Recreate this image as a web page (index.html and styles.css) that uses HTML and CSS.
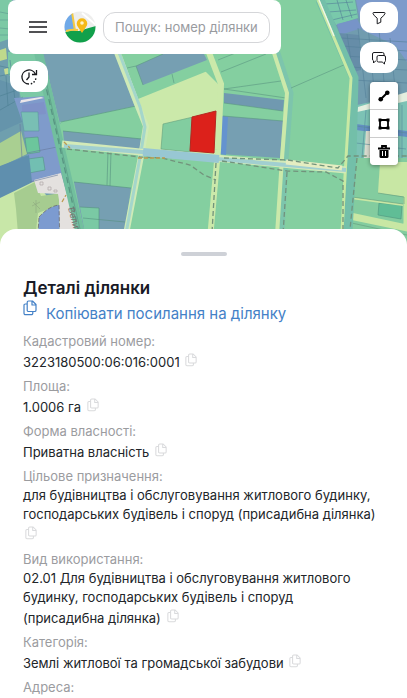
FILE: index.html
```html
<!DOCTYPE html>
<html lang="uk">
<head>
  <meta charset="UTF-8" />
  <meta name="viewport" content="width=device-width, initial-scale=1.0"/>
  <title>Деталі ділянки</title>
  <link rel="stylesheet" href="styles.css">
</head>
<body>

  <!-- Icons used more than once -->
  <svg class="icon-defs" aria-hidden="true">
    <symbol id="icon-copy" viewBox="0 0 14 16">
      <path d="M5.500 1h4l3.500 3.500v5.700a1.300 1.300 0 0 1-1.300 1.300H5.500a1.300 1.300 0 0 1-1.300-1.300V2.300A1.300 1.300 0 0 1 5.500 1zM9 1v4h4M4 4H2.300A1.300 1.300 0 0 0 1 5.300v8A1.300 1.300 0 0 0 2.300 14.600H8.500A1.300 1.300 0 0 0 9.800 13.300V11.700" fill="none" stroke="currentColor" stroke-width="1.200" stroke-linejoin="round"/>
    </symbol>
  </svg>

  <main class="app">
    <section class="map" aria-label="Карта">
      <svg class="map-canvas" viewBox="0 0 407 250" preserveAspectRatio="xMidYMin slice" aria-hidden="true">
        <rect width="407" height="250" fill="#84cfa0"/>

        <!-- left side -->
        <path d="M0 0H30L56 110 84 250H0z" fill="#6f9fae"/>
        <path d="M0 0H12V38L0 42z" fill="#7cc9a5"/>
        <path d="M0 12l10 2M0 20h10M0 28l10 1M0 35h10" stroke="#5d9b90" stroke-width=".6"/>
        <path d="M0 50l6-2 1 11-7 2z" fill="#bfd98c"/>
        <path d="M4 69l8-2v7l-7 1z" fill="#c7dd93"/>
        <path d="M8 52h37l7 50-30 2-4-20-10-10z" fill="#7cc9a5"/>
        <path d="M0 80l18 6 4 36-22 10z" fill="#6594ab"/>
        <path d="M10 60l5 40M0 96l20-7M0 110l23-13M0 66l9 2M0 76l10-2M6 76l2 30" stroke="#4d7f93" stroke-width=".6" fill="none"/>
        <path d="M14 98l34-2 14 78-31 10-8-60z" fill="#7f9bcb"/>
        <path d="M20 103l1-3 20-3 3 1z" fill="#ece6ea"/>
        <path d="M22 105l22-3 2 12-24 2z" fill="#7f92c8"/>
        <path d="M21 112h17l1 19H24z" fill="#79bfb4" stroke="#5d93a2" stroke-width=".6"/>
        <path d="M25 138l13-1 2 15-13 2z" fill="#6cc69c" stroke="#559387" stroke-width=".6"/>
        <path d="M28 159l15-2 2 13-16 3z" fill="#72bfb2" stroke="#559387" stroke-width=".6"/>
        <path d="M0 143l21-12 6 23-27 13z" fill="#a9cf91"/>
        <path d="M0 166l29-11 3 27-32 19z" fill="#5f8fae"/>
        <path d="M0 198l35-17 11 14 18 30v25H0z" fill="#c8e7a8"/>
        <path d="M14 193l21-11 6 14 20-3 3 10-26 10-2 18-18 3-2-25z" fill="#a6cc90"/>
        <path d="M34 180l27-7 14 50 1 27H60l-1-50-1-6-20-1z" fill="#e4e1df"/>
        <path d="M39 217q10-11 20-12l1 45H37z" fill="#7c9bd0" stroke="#665f64" stroke-width=".7" stroke-dasharray="4 2"/>
        <path d="M40 182h3v3h-3zM48 187h3v3h-3zM54 190h3v2h-3z" fill="none" stroke="#b0a8a8" stroke-width=".7"/>
        <path d="M32 206l8-4M36 200v13M33 202l7 7" stroke="#8fa980" stroke-width=".6"/>
        <path d="M20 124l2 34M27 153l30-6M30 182l28-7" stroke="#66789e" stroke-width=".6" fill="none"/>

        <!-- blue and green parcels in the middle -->
        <path d="M42 50h72l21 57-75 17z" fill="#76a0b2"/>
        <path d="M60 122l75-16 8 31-80-6z" fill="#84cfa0"/>
        <path d="M63 131l79 8-2 11-76-8z" fill="#769fb2"/>
        <path d="M74 182l57 6-9 62H88z" fill="#769fb2"/>
        <path d="M80 207l19 1v42H88z" fill="#7ac9a4"/>
        <path d="M61 122l75-16M63 131l79 8M108 151l-1 34M111 152l-1 34M80 207l19 1v42M83 218l42 4M74 182l57 6" fill="none" stroke="#55907f" stroke-width=".6"/>

        <!-- road going down along the left blocks -->
        <path d="M38 50L55 125 84 250" fill="none" stroke="#72bf9e" stroke-width="9"/>
        <path d="M42 70L56 130 83 250" fill="none" stroke="#589482" stroke-width="1.300" stroke-dasharray="6 4"/>
        <path d="M47 85l9 40 27 117" fill="none" stroke="#589482" stroke-width=".6"/>

        <!-- pale field -->
        <path d="M120 50l25 0 55 16 20 20-2 70-76-6 6-25-17-38z" fill="#cbe9aa"/>
        <path d="M120 50h87l3 20-72 29z" fill="#84cfa0"/>
        <path d="M136 66l27-12h41l3 6-64 25z" fill="#769fb2"/>
        <path d="M127 68l9-2 7 19M172 74l2 9M136 66l27-12" fill="none" stroke="#5b9581" stroke-width=".6"/>
        <path d="M163 124l30-7-3 35-29-3z" fill="#82cda0" stroke="#649f7e" stroke-width=".6"/>
        <path d="M116 50l21 54 9 22-4 25-19 99" fill="none" stroke="#cfeab7" stroke-width="6"/>
        <path d="M118 50l22 57 5 20-4 25-18 98" fill="none" stroke="#a4d6cb" stroke-width="3"/>

        <!-- parcels right of the red one -->
        <path d="M214 58l59-8 16 44-5 66-69-8 8-70z" fill="#84cfa0"/>
        <path d="M224 93l60 7-1 11-59-8z" fill="#7099b0"/>
        <path d="M223 116l60 5-3 37-60-4z" fill="#769fb2"/>
        <path d="M222 116l6 1-2 38-7-1z" fill="#6493cf"/>
        <path d="M221 72l45-18M224 89l57-8M224 89l62 9M218 60l20-8M224 103l59 8M223 116l60 5" fill="none" stroke="#5b9581" stroke-width=".6"/>
        <path d="M208 50l13 34-3 66-9 100" fill="none" stroke="#cbe9aa" stroke-width="6"/>
        <path d="M277 50l14 43-5 67-5 90" fill="none" stroke="#7dc5ac" stroke-width="5"/>
        <path d="M273 50l14 43-5 65-6 92" fill="none" stroke="#cbe9aa" stroke-width="4"/>
        <path d="M291 88l55-24" stroke="#5b9581" stroke-width=".6"/>

        <!-- right side -->
        <path d="M318 0h89v170h-56l4-90z" fill="#719caf"/>
        <path d="M322 0h33l3 18-22 7z" fill="#79c9ab"/>
        <path d="M337 24l20-5 5 9-22 7z" fill="#7794c8"/>
        <path d="M356 0h51v62l-12-17-33-15z" fill="#7d9bcb"/>
        <path d="M339 33l20 2 2 35-12 3z" fill="#668da8"/>
        <path d="M341 38l66 4M342 46l65 5M345 56l62 4M349 67l58 3M353 80l54 3M347 34l10 66M358 28l8 70M368 26l7 74M379 30l6 62M390 38l5 50M325 4l28-2M328 12l28-2M332 20l25-6M337 0l6 20M346 0l6 18" stroke="#547f98" stroke-width=".6"/>
        <path d="M357 105l50-11v68h-56z" fill="#7cc2b5"/>
        <path d="M358 107l49-15v9l-50 11z" fill="#e4efdf"/>
        <path d="M356 124l51 7v6l-51-7z" fill="#638fc2"/>
        <path d="M366 131h12v27h-14z" fill="#d9dccf"/>
        <path d="M356 126l51 7M356 143l50 6M366 110l-4 48M402 105v57" stroke="#568b9b" stroke-width=".6"/>
        <path d="M349 158h58v92h-61z" fill="#83cc9f"/>
        <path d="M380 162h27v35l-29-4z" fill="#c8e7a4"/>
        <path d="M379 203l23 2-1 14-23-4z" fill="#60bd96" stroke="#4e937d" stroke-width=".6"/>
        <path d="M350 216l57 12V165" fill="none" stroke="#c8e7a4" stroke-width="7"/>
        <path d="M351 198l52 7" stroke="#c8e7a4" stroke-width="2"/>
        <path d="M352 197l51 7M378 193l26 4v7M347 222l60 13" fill="none" stroke="#629b7c" stroke-width=".6"/>
        <path d="M320 0l34 78-2 80-5 92" fill="none" stroke="#73bfa9" stroke-width="9"/>
        <path d="M318 0l33 78-5 80-5 92" fill="none" stroke="#c9e9a3" stroke-width="3"/>
        <path d="M319 0l15 36" stroke="#eef6ea" stroke-width="1.300"/>

        <!-- horizontal road -->
        <path d="M62 144l78 8 75 6 131 12" fill="none" stroke="#d3eab8" stroke-width="7"/>
        <path d="M64 146l78 6 75 7 129 11" fill="none" stroke="#a1cfd0" stroke-width="4"/>
        <path d="M143 152l76 7" stroke="#98c7d3" stroke-width="8"/>
        <path d="M286 162l56 6" stroke="#e5edc1" stroke-width="5"/>
        <g fill="none" stroke="#72937c" stroke-width="1.300" stroke-dasharray="5 3">
          <path d="M67 149l73 8 22 1 28 7 14 10 12 5"/>
          <path d="M222 161l65 10 39 1 17 9v69"/>
          <path d="M216 163l-5 87M287 172l-5 78M357 158l-9 92"/>
          <path d="M224 158l64 2 50 8 10-12h59"/>
        </g>
        <path d="M64 142l6 6M138 158h27M62 202l4-7" stroke="#bd9b50" stroke-width="1.300" stroke-dasharray="4 2"/>
        <text class="street-name" transform="translate(68 208) rotate(76)">Велика</text>

        <path class="selected-parcel" d="M192 117l24-6-2 42-24-2z"/>
      </svg>

      <header class="topbar">
        <button class="menu-btn" type="button" aria-label="Меню">
          <svg width="20" height="14" viewBox="0 0 20 14"><path d="M1 2h18M1 7h18M1 12h18" stroke="#18191d" stroke-width="1.600"/></svg>
        </button>
        <a class="logo" href="#" aria-label="Головна">
          <svg width="32" height="32" viewBox="0 0 32 32">
            <clipPath id="logo-clip"><circle cx="16" cy="16" r="15.500"/></clipPath>
            <g clip-path="url(#logo-clip)">
              <path d="M0 0h32v32H0z" fill="#eeeeed"/>
              <path d="M0 0h8l3 20H0z" fill="#70a9e8"/>
              <path d="M8 1l3 19" stroke="#f4ca43" stroke-width="2"/>
              <path d="M18 2l14 12" stroke="#fff" stroke-width="2"/>
              <path d="M0 21q8-2 15-1 9-3 17-5v17H0z" fill="#11a04b"/>
              <path d="M2 20q7-2 12-1" stroke="#f4ca43" stroke-width="2" fill="none"/>
            </g>
            <path d="M18 22l-4-6a5.300 5.300 0 1 1 8 0z" fill="#f5b916"/>
            <circle cx="18" cy="12" r="1.800" fill="#fff3c7"/>
          </svg>
        </a>
        <input class="search" type="text" aria-label="Пошук" placeholder="Пошук: номер ділянки">
      </header>

      <button class="pill history-btn" type="button" aria-label="Історія">
        <svg width="18" height="18" viewBox="0 0 18 18" fill="none" stroke="#18191d" stroke-width="1.300">
          <path d="M9 16A7 7 0 1 1 15.300 6M16.500 2v4.500H12M9 4.500V9l-2.500 3"/>
          <path d="M11.500 15.600A7 7 0 0 0 16 9" stroke-linecap="round" stroke-width="1.600" stroke-dasharray=".1 3"/>
        </svg>
      </button>

      <div class="map-tools">
        <button class="pill" type="button" aria-label="Фільтр">
          <svg width="14" height="14" viewBox="0 0 14 14"><path d="M1.800 1.500h10.400q1 0 .8 1-.4 1.800-4.200 4.700v4L5.200 12.800V7.200Q1.400 4.300 1 2.500q-.2-1 .8-1z" fill="none" stroke="#18191d" stroke-linejoin="round"/></svg>
        </button>
        <button class="pill" type="button" aria-label="Повідомлення">
          <svg width="16" height="14" viewBox="0 0 16 14" fill="none" stroke="#18191d" stroke-linejoin="round">
            <path d="M5 10H4.500L2.500 12V9.800Q1.500 9.500 1.500 8V3Q1.500 1.500 3 1.500h8.500Q13 1.500 13 3v1.500"/>
            <path d="M7.500 4.500h5.500q1.500 0 1.500 1.500v3.500q0 1.300-1 1.500V13l-2.300-2H7.500Q6 11 6 9.500V6q0-1.500 1.500-1.500z"/>
          </svg>
        </button>
        <div class="draw-tools">
          <button type="button" aria-label="Лінія">
            <svg width="12" height="12" viewBox="0 0 12 12"><path d="M2.500 9.500l7-7" stroke="#000" stroke-width="2"/><circle cx="2.700" cy="9.300" r="2.300"/><circle cx="9.300" cy="2.700" r="2.300"/></svg>
          </button>
          <button type="button" aria-label="Полігон">
            <svg width="12" height="12" viewBox="0 0 12 12"><path d="M2 2h8v8H2z" fill="none" stroke="#000" stroke-width="1.800"/><path d="M.5.5h3v3h-3zM8.500.5h3v3h-3zM.5 8.500h3v3h-3zM8.500 8.500h3v3h-3z"/></svg>
          </button>
          <button type="button" aria-label="Видалити">
            <svg width="12" height="14" viewBox="0 0 12 14"><path d="M0 3.500h12M4 3V1h4v2" fill="none" stroke="#000" stroke-width="1.800"/><path d="M1.500 5h9v6.500q0 1.500-1.500 1.500H3q-1.500 0-1.500-1.500z"/><path d="M4.500 6v5M7.500 6v5" stroke="#fff"/></svg>
          </button>
        </div>
      </div>
    </section>

    <section class="sheet">
      <div class="handle"></div>
      <h1>Деталі ділянки</h1>
      <a class="copy-link" href="#">
        <svg width="14" height="16"><use href="#icon-copy"/></svg>
        <span>Копіювати посилання на ділянку</span>
      </a>

      <dl class="details">
        <dt>Кадастровий номер:</dt>
        <dd>3223180500:06:016:0001 <button class="copy-btn" type="button" aria-label="Копіювати"><svg width="12" height="14"><use href="#icon-copy"/></svg></button></dd>
        <dt>Площа:</dt>
        <dd>1.0006 га <button class="copy-btn" type="button" aria-label="Копіювати"><svg width="12" height="14"><use href="#icon-copy"/></svg></button></dd>
        <dt>Форма власності:</dt>
        <dd>Приватна власність <button class="copy-btn" type="button" aria-label="Копіювати"><svg width="12" height="14"><use href="#icon-copy"/></svg></button></dd>
        <dt>Цільове призначення:</dt>
        <dd>для будівництва і обслуговування житлового будинку, господарських будівель і споруд (присадибна&nbsp;ділянка) <button class="copy-btn" type="button" aria-label="Копіювати"><svg width="12" height="14"><use href="#icon-copy"/></svg></button></dd>
        <dt>Вид використання:</dt>
        <dd>02.01 Для будівництва і обслуговування житлового будинку, господарських будівель і споруд (присадибна&nbsp;ділянка)&nbsp;<button class="copy-btn" type="button" aria-label="Копіювати"><svg width="12" height="14"><use href="#icon-copy"/></svg></button></dd>
        <dt>Категорія:</dt>
        <dd>Землі житлової та громадської забудови <button class="copy-btn" type="button" aria-label="Копіювати"><svg width="12" height="14"><use href="#icon-copy"/></svg></button></dd>
        <dt>Адреса:</dt>
      </dl>
    </section>
  </main>

</body>
</html>
```

FILE: styles.css
```css
* {
  box-sizing: border-box;
}
body {
  margin: 0;
  font-family: Inter, 'Noto Sans', sans-serif;
  background: #fff;
  color: #212529;
}
button {
  font: inherit;
  padding: 0;
  border: none;
  background: #fff;
  cursor: pointer;
}
svg {
  display: block;
}
.icon-defs {
  display: none;
}
.app {
  height: 100vh;
  overflow: hidden;
}

/* Map */
.map {
  position: relative;
  height: 250px;
  overflow: hidden;
}
.map-canvas {
  position: absolute;
  top: 0; left: 0;
  width: 100%; height: 100%;
}
.street-name {
  font-size: 9px;
  fill: #77706f;
}
.selected-parcel {
  fill: #dc211b;
  stroke: #b42820;
}

.topbar {
  position: absolute;
  top: 0;
  left: 8px;
  right: 126px;
  display: flex;
  align-items: center;
  padding: 11px 11px 11px 20px;
  border-radius: 8px;
  background: #fff;
}
.menu-btn {
  margin-right: 16px;
}
.logo {
  margin-right: 7px;
}
.search {
  flex: 1;
  min-width: 0;
  height: 31px;
  padding: 0 11px;
  border: 1px solid #d5d6d9;
  border-radius: 12px;
  font: inherit;
  font-size: 13px;
  color: #212529;
}
.search::placeholder {
  color: #999b9f;
}

.pill {
  display: flex;
  align-items: center;
  justify-content: center;
  width: 38px;
  height: 31px;
  border-radius: 12px;
}
.history-btn {
  position: absolute;
  top: 61px;
  left: 10px;
}
.map-tools {
  position: absolute;
  top: 2px;
  right: 9px;
  display: flex;
  flex-direction: column;
  align-items: flex-end;
  gap: 9px;
}
.draw-tools {
  display: flex;
  flex-direction: column;
  gap: 1px;
  width: 28px;
  border-radius: 4px;
  background: #ccc;
  box-shadow: 0 1px 4px rgba(0, 0, 0, 0.4);
  overflow: hidden;
}
.draw-tools button {
  display: flex;
  align-items: center;
  justify-content: center;
  height: 27px;
}

/* Parcel details */
.sheet {
  position: relative;
  margin-top: -21px;
  padding: 23px 23px 0;
  border-radius: 16px 16px 0 0;
  background: #fff;
}
.handle {
  width: 46px;
  height: 4px;
  margin: 0 auto;
  border-radius: 2px;
  background: #ced1d7;
}
h1 {
  margin: 20px 0 0;
  font-size: 17px;
  line-height: 24px;
  font-weight: 600;
  color: #181a26;
}
.copy-link {
  display: flex;
  gap: 9px;
  color: #4481c7;
  font-size: 15px;
  line-height: 28px;
  text-decoration: none;
}
.details {
  margin: 3px 0 0;
  font-size: 13px;
}
.details dt {
  line-height: 20px;
  color: #9b9c9f;
}
.details dd {
  margin: 0;
  line-height: 19px;
}
.copy-btn {
  display: inline-flex;
  align-items: flex-start;
  height: 25px;
  padding: 2px 2px 0;
  vertical-align: middle;
  color: #d9dadc;
}
```
